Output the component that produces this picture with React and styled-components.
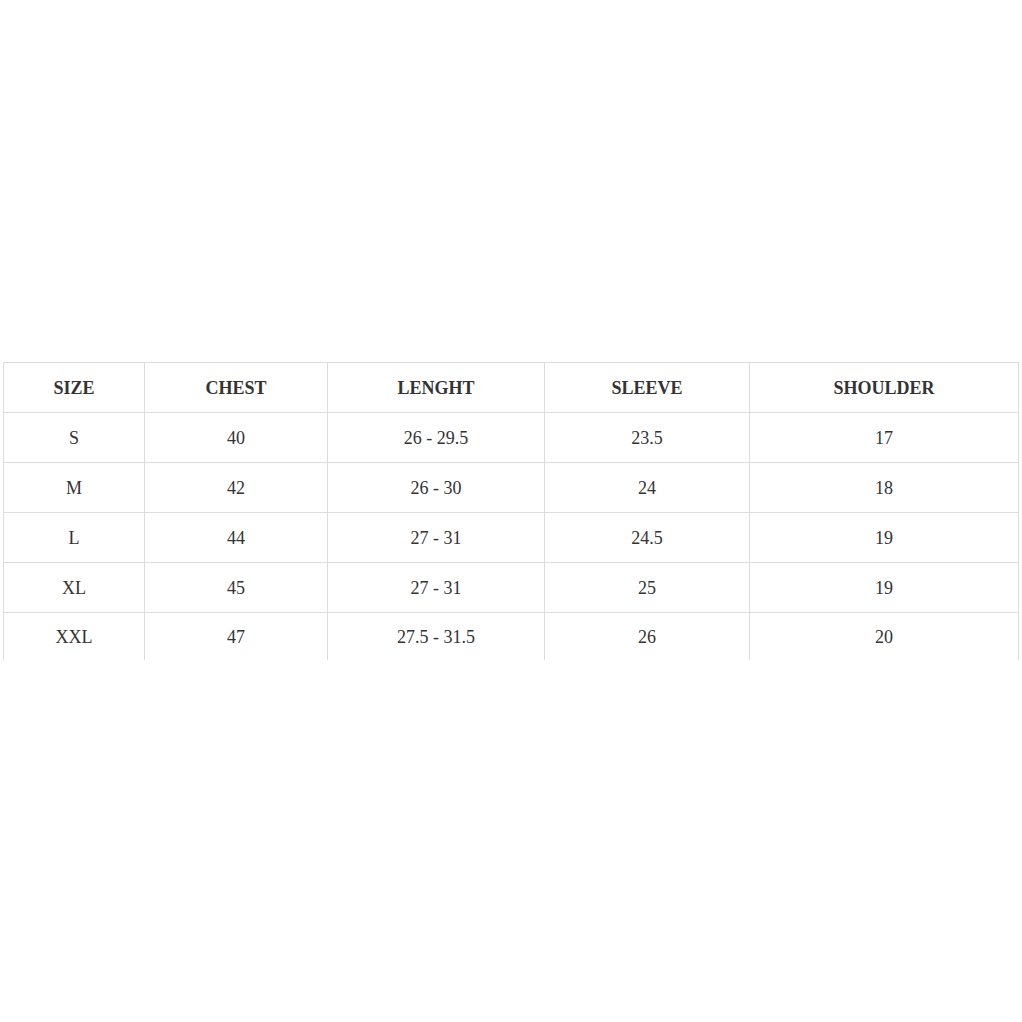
import React from 'react'
import styled, { createGlobalStyle } from 'styled-components'

const Global = createGlobalStyle`
  html, body {
    margin: 0;
    padding: 0;
    background: #fff;
  }
`

const Page = styled.div`
  height: 1022px;
  display: flex;
  align-items: center;
  padding: 0 3px 0 3px;
  box-sizing: border-box;
`

const Table = styled.table`
  width: 1016px;
  border-collapse: collapse;
  table-layout: fixed;
  font-family: "Liberation Serif", "Times New Roman", serif;
  font-size: 18px;
  color: #333;
  margin-top: -1px;
`

const Head = styled.th`
  height: 47px;
  padding: 2px 0 0;
  border: 1px solid #ddd;
  font-weight: bold;
  text-align: center;
  width: ${p => (p.w ? `${p.w}px` : 'auto')};
`

const Row = styled.tr`
  &:last-child td {
    border-bottom: none;
    height: 45px;
  }
`

const Cell = styled.td`
  height: 47px;
  padding: 2px 0 0;
  border: 1px solid #ddd;
  text-align: center;
`

const cols = [
  { name: 'SIZE', w: 140 },
  { name: 'CHEST', w: 182 },
  { name: 'LENGHT', w: 216 },
  { name: 'SLEEVE', w: 204 },
  { name: 'SHOULDER' },
]

const rows = [
  ['S', '40', '26 - 29.5', '23.5', '17'],
  ['M', '42', '26 - 30', '24', '18'],
  ['L', '44', '27 - 31', '24.5', '19'],
  ['XL', '45', '27 - 31', '25', '19'],
  ['XXL', '47', '27.5 - 31.5', '26', '20'],
]

export default function App() {
  return (
    <>
      <Global />
      <Page>
        <Table>
          <thead>
            <tr>
              {cols.map(c => (
                <Head key={c.name} w={c.w}>{c.name}</Head>
              ))}
            </tr>
          </thead>
          <tbody>
            {rows.map((r, i) => (
              <Row key={i}>
                {r.map((v, j) => (
                  <Cell key={j}>{v}</Cell>
                ))}
              </Row>
            ))}
          </tbody>
        </Table>
      </Page>
    </>
  )
}
